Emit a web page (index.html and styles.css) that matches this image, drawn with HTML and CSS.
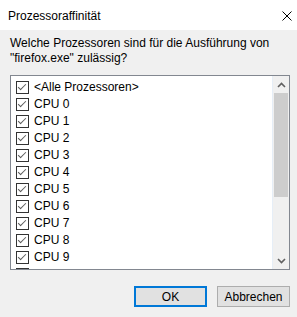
FILE: index.html
```html
<!DOCTYPE html>
<html lang="de">
<head>
    <meta charset="UTF-8">
    <title>Prozessoraffinität</title>
    <link rel="stylesheet" href="styles.css">
</head>
<body>
    <div class="dialog">
        <div class="titlebar">
            <span class="title">Prozessoraffinität</span>
            <svg class="close" width="10" height="10" viewBox="0 0 10 10">
                <path d="M0.5 0.5 L9.5 9.5 M9.5 0.5 L0.5 9.5" stroke="#000" stroke-width="1" fill="none"/>
            </svg>
        </div>
        <div class="content">
            <div class="question">Welche Prozessoren sind für die Ausführung von<br>"firefox.exe" zulässig?</div>
            <div class="listbox">
                <div class="items">
                    <div class="item"><span class="check"></span>&lt;Alle Prozessoren&gt;</div>
                    <div class="item"><span class="check"></span>CPU 0</div>
                    <div class="item"><span class="check"></span>CPU 1</div>
                    <div class="item"><span class="check"></span>CPU 2</div>
                    <div class="item"><span class="check"></span>CPU 3</div>
                    <div class="item"><span class="check"></span>CPU 4</div>
                    <div class="item"><span class="check"></span>CPU 5</div>
                    <div class="item"><span class="check"></span>CPU 6</div>
                    <div class="item"><span class="check"></span>CPU 7</div>
                    <div class="item"><span class="check"></span>CPU 8</div>
                    <div class="item"><span class="check"></span>CPU 9</div>
                    <div class="item"><span class="check"></span></div>
                </div>
                <div class="scrollbar">
                    <div class="arrow">
                        <svg width="9" height="6" viewBox="0 0 9 6"><path d="M1 5 L4.5 1.5 L8 5" stroke="#606060" stroke-width="1.6" fill="none"/></svg>
                    </div>
                    <div class="track">
                        <div class="thumb"></div>
                    </div>
                    <div class="arrow">
                        <svg width="9" height="6" viewBox="0 0 9 6"><path d="M1 1 L4.5 4.5 L8 1" stroke="#606060" stroke-width="1.6" fill="none"/></svg>
                    </div>
                </div>
            </div>
            <div class="buttons">
                <button class="btn default">OK</button>
                <button class="btn">Abbrechen</button>
            </div>
        </div>
    </div>
</body>
</html>
```

FILE: styles.css
```css
body {
    margin: 0;
    background-color: #f0f0f0;
    font-family: "Liberation Sans", Arial, sans-serif;
    font-size: 12px;
    color: #000;
}

.dialog {
    width: 297px;
    height: 317px;
    display: flex;
    flex-direction: column;
}

.titlebar {
    height: 30px;
    background-color: #fff;
    display: flex;
    align-items: center;
    justify-content: space-between;
    padding: 0 5px 0 8px;
}

.title {
    padding-top: 1px;
}

.close {
    display: block;
    margin-top: 1px;
}

.content {
    padding: 6px 7px 0 10px;
}

.question {
    line-height: 15px;
}

.listbox {
    margin-top: 9px;
    height: 193px;
    border: 1px solid #828790;
    background-color: #fff;
    display: flex;
}

.items {
    flex: 1;
    overflow: hidden;
    padding: 3px 0 0 5px;
}

.item {
    height: 17px;
    line-height: 17px;
    display: flex;
    align-items: center;
    white-space: nowrap;
}

.check {
    width: 11px;
    height: 11px;
    border: 1px solid #333;
    margin-right: 5px;
    flex-shrink: 0;
    position: relative;
    background-color: #fff;
}

.check::after {
    content: '';
    position: absolute;
    left: 3px;
    top: 0px;
    width: 3px;
    height: 7px;
    border-right: 1.5px solid #5a5a5a;
    border-bottom: 1.5px solid #5a5a5a;
    transform: rotate(45deg);
    transform-origin: center;
}

.scrollbar {
    width: 16px;
    background-color: #f0f0f0;
    border-left: 1px solid #e6eef7;
    display: flex;
    flex-direction: column;
}

.arrow {
    height: 17px;
    display: flex;
    align-items: center;
    justify-content: center;
}

.track {
    flex: 1;
    padding: 0 1px;
}

.thumb {
    height: 104px;
    background-color: #cdcdcd;
}

.buttons {
    margin-top: 16px;
    display: flex;
    justify-content: flex-end;
    gap: 10px;
}

.btn {
    width: 73px;
    height: 21px;
    margin: 0;
    padding: 0;
    font-family: "Liberation Sans", Arial, sans-serif;
    font-size: 12px;
    color: #000;
    background-color: #e1e1e1;
    border: 1px solid #adadad;
}

.btn.default {
    border: 2px solid #0078d7;
}
```
